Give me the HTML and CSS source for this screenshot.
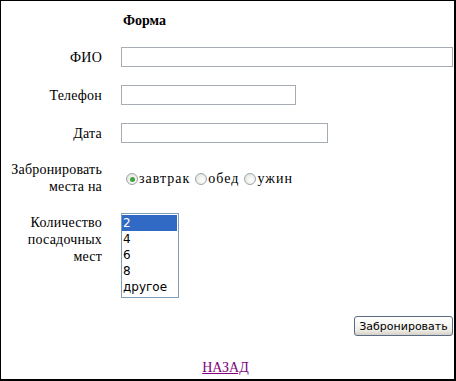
FILE: index.html
```html
<!DOCTYPE html>
<html lang="ru">
<head>
    <meta charset="UTF-8">
    <title>Форма</title>
    <link rel="stylesheet" href="styles.css">
</head>
<body>
    <div class="page">
        <form class="form">
            <div class="label"></div>
            <div class="title">Форма</div>

            <label class="label" for="fio">ФИО</label>
            <input class="field field-wide" type="text" id="fio">

            <label class="label" for="phone">Телефон</label>
            <input class="field field-phone" type="text" id="phone">

            <label class="label" for="date">Дата</label>
            <input class="field field-date" type="text" id="date">

            <div class="label">Забронировать<br>места на</div>
            <div class="options">
                <label class="option"><input type="radio" name="meal" checked><span>завтрак</span></label>
                <label class="option"><input type="radio" name="meal"><span>обед</span></label>
                <label class="option"><input type="radio" name="meal"><span>ужин</span></label>
            </div>

            <label class="label label-top" for="seats">Количество<br>посадочных<br>мест</label>
            <div class="listbox" id="seats">
                <div class="item selected">2</div>
                <div class="item">4</div>
                <div class="item">6</div>
                <div class="item">8</div>
                <div class="item">другое</div>
            </div>

            <div class="submit-row">
                <button type="button" class="btn">Забронировать</button>
            </div>
        </form>

        <div class="back">
            <a href="#" class="back-link">НАЗАД</a>
        </div>
    </div>
</body>
</html>
```

FILE: styles.css
```css
html, body {
    margin: 0;
    padding: 0;
    background: #fff;
}

.page {
    box-sizing: border-box;
    width: 456px;
    height: 381px;
    border-top: 1px solid #000;
    border-left: 1px solid #000;
    border-right: 2px solid #000;
    border-bottom: 2px solid #000;
    padding: 12px 2px 0 0;
    font-family: "Liberation Serif", "Times New Roman", serif;
    font-size: 14px;
    color: #000;
}

.form {
    display: grid;
    grid-template-columns: 101px 1fr;
    column-gap: 19px;
    row-gap: 18px;
    align-items: center;
}

.label {
    text-align: right;
    line-height: 17px;
    letter-spacing: 0.2px;
}

.label-top {
    align-self: start;
    padding-top: 1px;
}

.title {
    font-weight: bold;
    line-height: 16px;
    padding-left: 2px;
}

.field {
    box-sizing: border-box;
    height: 20px;
    border: 1px solid #a5acb5;
    padding: 1px 3px;
    font-size: 13px;
    margin: 0;
}

.field-wide {
    width: 332px;
}

.field-phone {
    width: 175px;
}

.field-date {
    width: 207px;
}

.options {
    display: flex;
    align-items: center;
    gap: 5px;
    padding-left: 5px;
    padding-top: 2px;
}

.option {
    display: flex;
    align-items: center;
    gap: 1px;
}

.option span {
    letter-spacing: 1px;
}

.option input {
    appearance: none;
    -webkit-appearance: none;
    width: 12px;
    height: 12px;
    margin: 0;
    border: 1px solid #9aa6b3;
    border-radius: 50%;
    background: radial-gradient(circle at 60% 60%, #fff 0%, #e8e8e2 70%, #d8d8d2 100%);
    box-sizing: border-box;
    position: relative;
}

.option input:checked::after {
    content: "";
    position: absolute;
    left: 2.5px;
    top: 2.5px;
    width: 5px;
    height: 5px;
    border-radius: 50%;
    background: #3fa63f;
}

.listbox {
    box-sizing: border-box;
    width: 58px;
    height: 85px;
    border: 1px solid #7f9db9;
    padding: 1px 0;
    font-family: "DejaVu Sans", Verdana, sans-serif;
    font-size: 12px;
}

.item {
    height: 16px;
    line-height: 16px;
    padding-left: 1px;
    margin-right: 1px;
}

.item.selected {
    background: #316ac5;
    color: #fff;
}

.submit-row {
    grid-column: 1 / 3;
    display: flex;
    justify-content: flex-end;
}

.btn {
    box-sizing: border-box;
    height: 20px;
    width: 99px;
    padding: 0;
    border: 1px solid #5a6b85;
    border-radius: 3px;
    background: linear-gradient(#ffffff, #f0f0ea 70%, #d6d0c5);
    font-family: "DejaVu Sans", Verdana, sans-serif;
    font-size: 11px;
    color: #000;
}

.back {
    text-align: center;
    margin-top: 24px;
    padding-right: 2px;
}

.back-link {
    color: #800080;
    text-decoration: underline;
}
```
